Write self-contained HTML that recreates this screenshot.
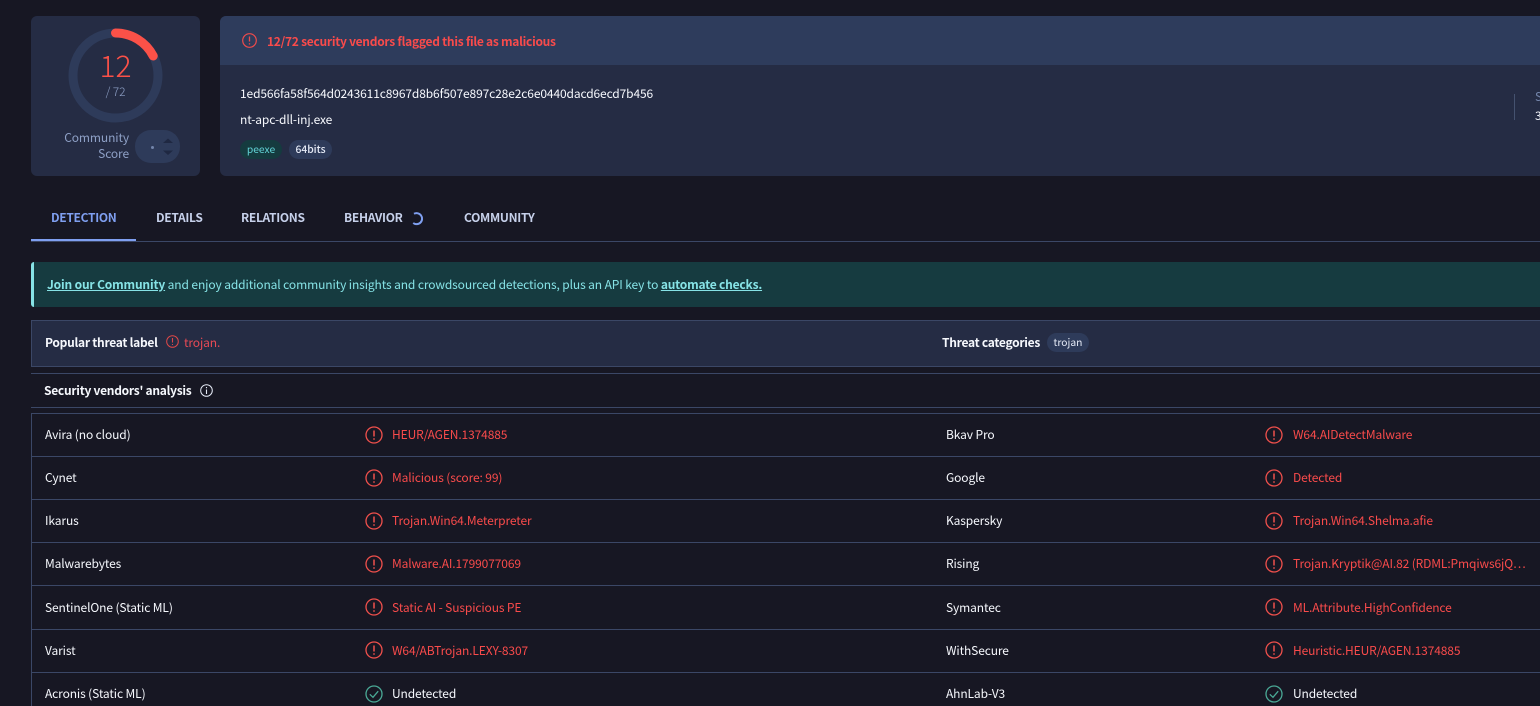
<!DOCTYPE html>
<html><head><meta charset="utf-8">
<style>
html,body{margin:0;padding:0;background:#171723;}
body{width:1540px;height:706px;overflow:hidden;position:relative;font-family:"Noto Sans CJK JP","Liberation Sans",sans-serif;font-size:12px;letter-spacing:-.12px;color:#f6f8fd;}
.a{position:absolute;white-space:nowrap;line-height:18px;}
.box{position:absolute;}
.line{position:absolute;background:#3b4766;height:1px;}
.red{color:#f94b4b;}
.b{font-weight:700;letter-spacing:-.27px;}
.m{font-weight:500;}
.t{font-size:10.3px;letter-spacing:0;}
svg{position:absolute;overflow:visible;}
.tab{position:absolute;top:209px;line-height:18px;font-size:12px;font-weight:700;color:#c6d0ea;letter-spacing:-.3px;white-space:nowrap;}
</style></head><body>

<div class="box" style="left:31px;top:16px;width:169px;height:160px;background:#252c44;border-radius:6px;"></div>
<svg style="left:68px;top:28px" width="95" height="95" viewBox="0 0 95 95">
<circle cx="47.5" cy="47.5" r="42.5" fill="none" stroke="#2e3b5a" stroke-width="9"/>
<path d="M47.5 5A42.5 42.5 0 0 1 85.2 28" fill="none" stroke="#fb5148" stroke-width="9" stroke-linecap="round"/>
</svg>
<div class="a" style="left:68px;width:95px;top:46px;text-align:center;font-size:30px;line-height:36px;color:#fb5148;font-weight:300;letter-spacing:0;">12</div>
<div class="a" style="left:68px;width:95px;top:83px;text-align:center;font-size:12px;color:#8ea0c6;font-weight:300;">/ 72</div>
<div class="a" style="left:40px;width:89px;top:130px;text-align:right;line-height:16px;color:#8ea0c6;white-space:normal;">Community<br>Score</div>
<div class="box" style="left:135px;top:130px;width:45px;height:33px;border-radius:16px;background:#2e3b5a;"></div>
<div class="box" style="left:151px;top:146px;width:3px;height:3px;border-radius:50%;background:#7385ab;"></div>
<svg style="left:162px;top:137px" width="12" height="20"><path d="M1 6L6 1.500L11 6Z" fill="#1f2842"/><path d="M1 13.500L6 18L11 13.500Z" fill="#1f2842"/></svg>

<div class="box" style="left:220px;top:16px;width:1320px;height:160px;background:#252c44;border-radius:6px 0 0 6px;overflow:hidden;">
<div class="box" style="left:0;top:0;width:1320px;height:49px;background:#2e3c5c;"></div>
</div>
<svg style="left:242px;top:33px" width="15" height="15" viewBox="0 0 15 15"><circle cx="7.500" cy="7.500" r="6.800" fill="none" stroke="#ed4b4b" stroke-width="1.200"/><path d="M7.500 3.500V8.500M7.500 10.300V11.500" stroke="#ed4b4b" stroke-width="1.300" fill="none"/></svg>
<div class="a b" style="left:267px;top:33px;color:#f94b4b;">12/72 security vendors flagged this file as malicious</div>
<div class="a" style="left:240px;top:85px;">1ed566fa58f564d0243611c8967d8b6f507e897c28e2c6e0440dacd6ecd7b456</div>
<div class="a" style="left:240px;top:111px;">nt-apc-dll-inj.exe</div>
<div class="box" style="left:240px;top:140px;width:42px;height:19px;border-radius:10px;background:#153b3f;"></div>
<div class="a t" style="left:240px;width:42px;text-align:center;top:140px;line-height:17px;color:#62d3d6;">peexe</div>
<div class="box" style="left:289px;top:140px;width:43px;height:19px;border-radius:10px;background:#2e3b5a;"></div>
<div class="a m t" style="left:289px;width:43px;text-align:center;top:140px;line-height:17px;color:#e6ebf7;">64bits</div>
<div class="box" style="left:1514px;top:94px;width:1px;height:26px;background:#45526f;"></div>
<div class="a" style="left:1535px;top:88px;color:#7385ab;">S</div>
<div class="a" style="left:1535px;top:107px;">3</div>

<div class="tab" style="left:51px;color:#7f9ff0;">DETECTION</div>
<div class="tab" style="left:156px;">DETAILS</div>
<div class="tab" style="left:241px;">RELATIONS</div>
<div class="tab" style="left:344px;">BEHAVIOR</div>
<svg style="left:411px;top:212px" width="14" height="14" viewBox="0 0 14 14"><path d="M3 1.800A5.500 5.500 0 1 1 2.200 11" fill="none" stroke="#7f9ff0" stroke-width="2"/></svg>
<div class="tab" style="left:464px;">COMMUNITY</div>
<div class="line" style="left:31px;top:241px;width:1509px;"></div>
<div class="box" style="left:31px;top:239px;width:105px;height:2px;background:#7f9ff0;"></div>

<div class="box" style="left:31px;top:262px;width:1509px;height:45px;background:#163b40;border-radius:3px 0 0 3px;"></div>
<div class="box" style="left:31px;top:262px;width:3px;height:45px;background:#86e3e6;border-radius:3px 0 0 3px;"></div>
<div class="a" style="left:47px;top:276px;color:#86e3e6;letter-spacing:-.11px;"><span class="b" style="text-decoration:underline;letter-spacing:-.16px;">Join our Community</span> and enjoy additional community insights and crowdsourced detections, plus an API key to <span class="b" style="text-decoration:underline;letter-spacing:-.2px;">automate checks.</span></div>

<div class="box" style="left:31px;top:320px;width:1509px;background:#252c44;border:1px solid #3b4766;border-right:0;box-sizing:border-box;height:47px;"></div>
<div class="a b" style="left:45px;top:334px;">Popular threat label</div>
<svg style="left:166px;top:335px" width="13" height="13" viewBox="0 0 13 13"><circle cx="6.500" cy="6.500" r="5.800" fill="none" stroke="#e04848" stroke-width="1"/><path d="M6.500 3V7.500M6.500 9V10" stroke="#e04848" stroke-width="1.100" fill="none"/></svg>
<div class="a" style="left:184px;top:334px;color:#e84a55;">trojan.</div>
<div class="a b" style="left:942px;top:334px;">Threat categories</div>
<div class="box" style="left:1047px;top:333px;width:42px;height:19px;border-radius:10px;background:#2e3b5a;"></div>
<div class="a t" style="left:1047px;width:42px;text-align:center;top:333px;line-height:17px;color:#e6ebf7;">trojan</div>

<div class="line" style="left:31px;top:373px;width:1509px;"></div>
<div class="a b" style="left:44px;top:382px;">Security vendors' analysis</div>
<svg style="left:200px;top:384px" width="13" height="13" viewBox="0 0 13 13"><circle cx="6.500" cy="6.500" r="5.800" fill="none" stroke="#e6ebf7" stroke-width="1"/><path d="M6.500 5.500V10M6.500 3V4.200" stroke="#e6ebf7" stroke-width="1.100" fill="none"/></svg>
<div class="line" style="left:31px;top:407px;width:1509px;"></div>

<div class="line" style="left:31px;top:413px;width:1509px;"></div>
<div class="line" style="left:31px;top:456px;width:1509px;"></div>
<div class="line" style="left:31px;top:499px;width:1509px;"></div>
<div class="line" style="left:31px;top:542px;width:1509px;"></div>
<div class="line" style="left:31px;top:585px;width:1509px;"></div>
<div class="line" style="left:31px;top:629px;width:1509px;"></div>
<div class="line" style="left:31px;top:672px;width:1509px;"></div>
<div class="box" style="left:31px;top:413px;width:1px;height:293px;background:#3b4766;"></div>

<svg width="0" height="0" style="position:absolute"><defs>
<g id="w"><circle cx="9" cy="9" r="8" fill="none" stroke="#f0504c" stroke-width="1.300"/><path d="M9 4.500V10.500M9 12.300V13.800" stroke="#f0504c" stroke-width="1.500" fill="none"/></g>
<g id="k"><circle cx="9" cy="9" r="8" fill="none" stroke="#4aa996" stroke-width="1.300"/><path d="M4.800 9.300L8 12.300L13.200 6.200" stroke="#4aa996" stroke-width="1.300" fill="none"/></g>
</defs></svg>

<div class="a" style="left:45px;top:426px;">Avira (no cloud)</div>
<svg style="left:365px;top:426px" width="18" height="18"><use href="#w"/></svg>
<div class="a red" style="left:392px;top:426px;">HEUR/AGEN.1374885</div>
<div class="a" style="left:946px;top:426px;">Bkav Pro</div>
<svg style="left:1265px;top:426px" width="18" height="18"><use href="#w"/></svg>
<div class="a red" style="left:1293px;top:426px;">W64.AIDetectMalware</div>

<div class="a" style="left:45px;top:469px;">Cynet</div>
<svg style="left:365px;top:469px" width="18" height="18"><use href="#w"/></svg>
<div class="a red" style="left:392px;top:469px;">Malicious (score: 99)</div>
<div class="a" style="left:946px;top:469px;">Google</div>
<svg style="left:1265px;top:469px" width="18" height="18"><use href="#w"/></svg>
<div class="a red" style="left:1293px;top:469px;">Detected</div>

<div class="a" style="left:45px;top:512px;">Ikarus</div>
<svg style="left:365px;top:512px" width="18" height="18"><use href="#w"/></svg>
<div class="a red" style="left:392px;top:512px;">Trojan.Win64.Meterpreter</div>
<div class="a" style="left:946px;top:512px;">Kaspersky</div>
<svg style="left:1265px;top:512px" width="18" height="18"><use href="#w"/></svg>
<div class="a red" style="left:1293px;top:512px;">Trojan.Win64.Shelma.afie</div>

<div class="a" style="left:45px;top:555px;">Malwarebytes</div>
<svg style="left:365px;top:555px" width="18" height="18"><use href="#w"/></svg>
<div class="a red" style="left:392px;top:555px;">Malware.AI.1799077069</div>
<div class="a" style="left:946px;top:555px;">Rising</div>
<svg style="left:1265px;top:555px" width="18" height="18"><use href="#w"/></svg>
<div class="a red" style="left:1293px;top:555px;">Trojan.Kryptik@AI.82 (RDML:Pmqiws6jQ…</div>

<div class="a" style="left:45px;top:599px;">SentinelOne (Static ML)</div>
<svg style="left:365px;top:598px" width="18" height="18"><use href="#w"/></svg>
<div class="a red" style="left:392px;top:599px;">Static AI - Suspicious PE</div>
<div class="a" style="left:946px;top:599px;">Symantec</div>
<svg style="left:1265px;top:598px" width="18" height="18"><use href="#w"/></svg>
<div class="a red" style="left:1293px;top:599px;">ML.Attribute.HighConfidence</div>

<div class="a" style="left:45px;top:642px;">Varist</div>
<svg style="left:365px;top:641px" width="18" height="18"><use href="#w"/></svg>
<div class="a red" style="left:392px;top:642px;">W64/ABTrojan.LEXY-8307</div>
<div class="a" style="left:946px;top:642px;">WithSecure</div>
<svg style="left:1265px;top:641px" width="18" height="18"><use href="#w"/></svg>
<div class="a red" style="left:1293px;top:642px;">Heuristic.HEUR/AGEN.1374885</div>

<div class="a" style="left:45px;top:685px;">Acronis (Static ML)</div>
<svg style="left:365px;top:685px" width="18" height="18"><use href="#k"/></svg>
<div class="a" style="left:392px;top:685px;">Undetected</div>
<div class="a" style="left:946px;top:685px;">AhnLab-V3</div>
<svg style="left:1265px;top:685px" width="18" height="18"><use href="#k"/></svg>
<div class="a" style="left:1293px;top:685px;">Undetected</div>

</body></html>
